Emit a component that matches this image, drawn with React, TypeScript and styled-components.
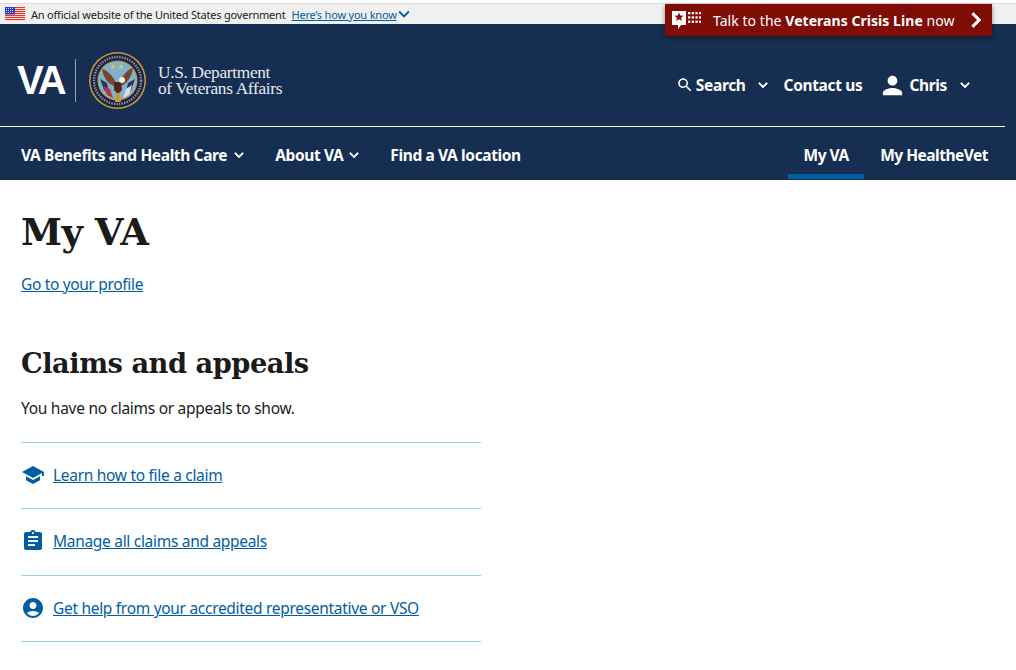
import React from 'react';
import styled, { createGlobalStyle } from 'styled-components';

const GlobalStyle = createGlobalStyle`
  html, body { margin: 0; padding: 0; background: #fff; overflow: hidden; }
  body { font-family: "Noto Sans", "Open Sans", sans-serif; color: #1b1b1b; }
`;

const Page = styled.div`
  position: relative;
  width: 1016px;
  height: 670px;
  overflow: hidden;
`;

const GovBanner = styled.div`
  display: flex;
  align-items: center;
  height: 21px;
  margin-top: 3px;
  border-top: 1px solid #dcdcdc;
  box-sizing: border-box;
  padding-left: 5px;
  background: #f0f0f0;
  font-size: 11px;
  letter-spacing: -0.21px;
`;

const FlagSvg = styled.svg`
  width: 20px;
  height: 14px;
  margin-right: 6px;
`;

const HowLink = styled.a`
  display: inline-flex;
  align-items: center;
  margin-left: 6px;
  color: #005ea2;
  letter-spacing: -0.2px;
  span { text-decoration: underline; }
  svg { margin: 0 0 0 -4px; }
`;

const CrisisButton = styled.a`
  position: absolute;
  top: 4px;
  left: 665px;
  width: 327px;
  height: 32px;
  box-sizing: border-box;
  display: flex;
  align-items: center;
  padding: 0 1px 0 7px;
  background: #7f0d06;
  border-radius: 0 0 2px 2px;
  box-shadow: 0 2px 5px rgba(0, 0, 0, 0.45);
  color: #fff;
  font-size: 14px;
  letter-spacing: 0.05px;
  b { font-weight: 700; }
`;

const CrisisText = styled.span`
  flex: 1;
  margin-left: 12px;
  white-space: nowrap;
`;

const Masthead = styled.header`
  background: #162e51;
  color: #fff;
  height: 156px;
`;

const TopRow = styled.div`
  display: flex;
  align-items: center;
  justify-content: space-between;
  height: 103px;
  padding: 0 31.5px 0 17px;
  box-sizing: border-box;
  width: 1005px;
  border-bottom: 1px solid #fff;
`;

const Logo = styled.div`
  display: flex;
  align-items: center;
  margin-top: 10px;
`;

const VaMark = styled.span`
  font-family: "Liberation Sans", sans-serif;
  font-weight: 700;
  font-size: 40px;
  letter-spacing: -3px;
  line-height: 1;
  width: 47px;
`;

const LogoRule = styled.span`
  width: 1px;
  height: 43px;
  margin: 0 13px 0 11px;
  background: rgba(255, 255, 255, 0.55);
`;

const DeptName = styled.span`
  margin: 2px 0 0 12px;
  font-family: "Liberation Serif", serif;
  font-size: 17.3px;
  line-height: 16px;
  letter-spacing: -0.3px;
  color: #e6e9ee;
`;

const UtilityNav = styled.nav`
  display: flex;
  align-items: center;
  margin-top: 20px;
  font-size: 15.5px;
  font-weight: 700;
  letter-spacing: -0.35px;
`;

const UtilityItem = styled.span<{ $gap?: number }>`
  display: flex;
  align-items: center;
  margin-left: ${(p) => p.$gap ?? 0}px;
  white-space: nowrap;
`;

const Icon = styled.svg<{ $size: number; $space?: number; $left?: number }>`
  width: ${(p) => p.$size}px;
  height: ${(p) => p.$size}px;
  margin-right: ${(p) => p.$space ?? 0}px;
  margin-left: ${(p) => p.$left ?? 0}px;
  flex: none;
  fill: currentColor;
`;

const MainNav = styled.nav`
  display: flex;
  align-items: stretch;
  height: 52px;
  padding: 0 28px 0 21px;
  font-size: 15.5px;
  font-weight: 700;
  letter-spacing: -0.38px;
`;

const NavItem = styled.a<{ $active?: boolean; $width?: number; $gap?: number; $tight?: boolean; $shift?: number }>`
  display: flex;
  align-items: center;
  justify-content: center;
  box-sizing: border-box;
  height: 52px;
  white-space: nowrap;
  width: ${(p) => (p.$width ? `${p.$width}px` : 'auto')};
  margin-left: ${(p) => p.$gap ?? 0}px;
  margin-right: ${(p) => p.$shift ?? 0}px;
  letter-spacing: ${(p) => (p.$tight ? '-0.5px' : 'inherit')};
  border-bottom: 5px solid ${(p) => (p.$active ? '#005ea2' : 'transparent')};
  padding-top: 9px;
`;

const Spacer = styled.span`
  flex: 1;
`;

const Content = styled.main`
  width: 460px;
  padding: 0 0 0 21px;
`;

const Title = styled.h1`
  margin: 29px 0 0;
  font-family: "DejaVu Serif", serif;
  font-size: 37px;
  line-height: 46px;
  font-weight: 700;
  letter-spacing: -0.5px;
`;

const ProfileLink = styled.a`
  display: block;
  margin-top: 17px;
  font-size: 15.5px;
  line-height: 24px;
  color: #005ea2;
  text-decoration: underline;
  letter-spacing: -0.33px;
`;

const SectionTitle = styled.h2`
  margin: 48px 0 0;
  font-family: "DejaVu Serif", serif;
  font-size: 27.3px;
  line-height: 38px;
  font-weight: 700;
  letter-spacing: -0.5px;
`;

const EmptyText = styled.p`
  margin: 14px 0 22px;
  font-size: 15.5px;
  line-height: 24px;
  letter-spacing: -0.28px;
`;

const LinkRow = styled.a`
  display: flex;
  align-items: center;
  height: 66.33px;
  box-sizing: border-box;
  padding-bottom: 2px;
  border-top: 1px solid #97d4ea;
  color: #005ea2;
  font-size: 15.5px;
  letter-spacing: -0.3px;
  &:last-child { border-bottom: 1px solid #97d4ea; height: 67.33px; padding-bottom: 0; }
  span { text-decoration: underline; }
`;

const Arrow = ({ size = 18, left = 0, weight = 0.8 }: { size?: number; left?: number; weight?: number }) => (
  <Icon $size={size} $left={left} viewBox="0 0 24 24">
    <path d="M16.59 8.59 12 13.17 7.41 8.59 6 10l6 6 6-6z" stroke="currentColor" strokeWidth={weight} />
  </Icon>
);

function Flag () {
  const stripes = [0, 2, 4, 6, 8, 10, 12];
  return (
    <FlagSvg viewBox="0 0 20 14">
      <rect width="20" height="14" fill="#fff" />
      {stripes.map((y) => <rect key={y} y={y} width="20" height="1.2" fill="#e63a20" />)}
      <rect width="10" height="7.5" fill="#2a3fc0" />
      {[1.5, 3.5, 5.5].map((y) => [1.5, 3.5, 5.5, 7.5].map((x) => (
        <circle key={`${x}-${y}`} cx={x} cy={y} r="0.5" fill="#fff" />
      )))}
    </FlagSvg>
  );
}

function CrisisIcon () {
  const dots = [0, 1, 2].flatMap((r) => [0, 1, 2, 3].map((c) => ({ r, c })));
  return (
    <svg width="29" height="24" viewBox="0 0 29 24">
      <path d="M0 3h14v14h-5l-3 4v-4H0z" fill="#fff" />
      <path d="M7 4.500l1.300 3 3.200.2-2.500 2.100.9 3.200L7 11.300 4.100 13l.9-3.200-2.500-2.100 3.200-.2z" fill="#7f0d06" />
      {dots.map(({ r, c }) => (
        <rect key={`${r}${c}`} x={16 + c * 3.7} y={r * 4.3 + 4} width="2.3" height="2.3" fill="#fff" />
      ))}
    </svg>
  );
}

function Seal () {
  return (
    <svg width="57" height="57" viewBox="0 0 57 57">
      <circle cx="28.5" cy="28.5" r="28.5" fill="#c79a3a" />
      <circle cx="28.5" cy="28.5" r="27" fill="#1b2440" />
      <circle cx="28.5" cy="28.5" r="20" fill="#c79a3a" />
      <circle cx="28.5" cy="28.5" r="19" fill="#7fb2d0" />
      <circle cx="28.5" cy="28.5" r="23.5" fill="none" stroke="#8d93a6" strokeWidth="2.4" strokeDasharray="1.4 1.2" />
      <path d="M11 27l7 4 2 10-5-3z" fill="#27325f" />
      <path d="M46 27l-7 4-2 10 5-3z" fill="#27325f" />
      <path d="M14 34l7 3 3 9-6-3z" fill="#b8333a" />
      <path d="M43 33l-6 4-3 9 6-3z" fill="#d9dbe2" />
      <path d="M13 17c5 1 10 6 13 12l-1 5c-6-2-11-9-12-17z" fill="#7a4526" />
      <path d="M44 16c-5 1-10 7-13 13l1 5c6-2 11-10 12-18z" fill="#7a4526" />
      <path d="M25 30h7l1 8-4 4-4-4z" fill="#4a2a17" />
      <circle cx="33" cy="28" r="3" fill="#eef0ee" />
      <path d="M27 41h4l1 9h-6z" fill="#c79a3a" />
      <path d="M24 12l1 2h2l-1.500 1 .5 2-2-1-2 1 .5-2-1.500-1h2zM32 12l1 2h2l-1.500 1 .5 2-2-1-2 1 .5-2-1.500-1h2z" fill="#e0c35a" />
    </svg>
  );
}

export default function App () {
  return (
    <Page>
      <GlobalStyle />
      <GovBanner>
        <Flag />
        An official website of the United States government
        <HowLink><span>Here’s how you know</span><Arrow size={22} weight={0} /></HowLink>
      </GovBanner>
      <CrisisButton>
        <CrisisIcon />
        <CrisisText>Talk to the <b>Veterans Crisis Line</b> now</CrisisText>
        <Icon $size={30} viewBox="0 0 24 24">
          <path d="M10 6 8.590 7.410 13.170 12l-4.580 4.590L10 18l6-6z" stroke="#fff" strokeWidth="0.6" />
        </Icon>
      </CrisisButton>
      <Masthead>
        <TopRow>
          <Logo>
            <VaMark>VA</VaMark>
            <LogoRule />
            <Seal />
            <DeptName>U.S. Department<br />of Veterans Affairs</DeptName>
          </Logo>
          <UtilityNav>
            <UtilityItem>
              <Icon $size={18} $space={2} viewBox="0 0 24 24">
                <path d="M15.5 14h-.79l-.28-.27C15.41 12.59 16 11.11 16 9.500 16 5.910 13.090 3 9.500 3S3 5.910 3 9.500 5.910 16 9.500 16c1.610 0 3.090-.59 4.230-1.570l.27.28v.79l5 4.990L20.490 19l-4.990-5zm-6 0C7.010 14 5 11.990 5 9.500S7.010 5 9.500 5 14 7.010 14 9.500 11.990 14 9.500 14z" />
              </Icon>
              Search
              <Arrow left={8.5} />
            </UtilityItem>
            <UtilityItem $gap={11.5}>Contact us</UtilityItem>
            <UtilityItem $gap={16}>
              <Icon $size={29} $space={2} viewBox="0 0 24 24">
                <path d="M12 12c2.210 0 4-1.790 4-4s-1.790-4-4-4-4 1.790-4 4 1.790 4 4 4zm0 2c-2.670 0-8 1.340-8 4v2h16v-2c0-2.660-5.330-4-8-4z" />
              </Icon>
              Chris
              <Arrow left={8.5} />
            </UtilityItem>
          </UtilityNav>
        </TopRow>
        <MainNav>
          <NavItem>VA Benefits and Health Care<Arrow left={2.5} /></NavItem>
          <NavItem $gap={27.5}>About VA<Arrow left={2} /></NavItem>
          <NavItem $gap={27}>Find a VA location</NavItem>
          <Spacer />
          <NavItem $active $tight $width={76} $shift={-1}>My VA</NavItem>
          <NavItem $tight $gap={17}>My HealtheVet</NavItem>
        </MainNav>
      </Masthead>
      <Content>
        <Title>My VA</Title>
        <ProfileLink>Go to your profile</ProfileLink>
        <SectionTitle>Claims and appeals</SectionTitle>
        <EmptyText>You have no claims or appeals to show.</EmptyText>
        <LinkRow>
          <Icon $size={24} $space={8} viewBox="0 0 24 24">
            <path d="M5 13.180v4L12 21l7-3.820v-4L12 17l-7-3.820zM12 3 1 9l11 6 9-4.910V13h2V9L12 3z" />
          </Icon>
          <span>Learn how to file a claim</span>
        </LinkRow>
        <LinkRow>
          <Icon $size={24} $space={8} viewBox="0 0 24 24">
            <path d="M19 3h-4.180C14.400 1.840 13.300 1 12 1c-1.300 0-2.400.84-2.820 2H5c-1.100 0-2 .9-2 2v14c0 1.100.9 2 2 2h14c1.100 0 2-.9 2-2V5c0-1.100-.9-2-2-2zm-7 0c.55 0 1 .45 1 1s-.45 1-1 1-1-.45-1-1 .45-1 1-1zm2 14H7v-2h7v2zm3-4H7v-2h10v2zm0-4H7V7h10v2z" />
          </Icon>
          <span>Manage all claims and appeals</span>
        </LinkRow>
        <LinkRow>
          <Icon $size={24} $space={8} viewBox="0 0 24 24">
            <path d="M12 2C6.480 2 2 6.480 2 12s4.480 10 10 10 10-4.480 10-10S17.520 2 12 2zm0 4c1.930 0 3.500 1.570 3.500 3.500S13.930 13 12 13s-3.500-1.570-3.500-3.500S10.070 6 12 6zm0 14c-2.030 0-4.430-.82-6.140-2.880C7.550 15.800 9.680 15 12 15s4.450.8 6.140 2.120C16.430 19.180 14.030 20 12 20z" />
          </Icon>
          <span>Get help from your accredited representative or VSO</span>
        </LinkRow>
      </Content>
    </Page>
  );
}
